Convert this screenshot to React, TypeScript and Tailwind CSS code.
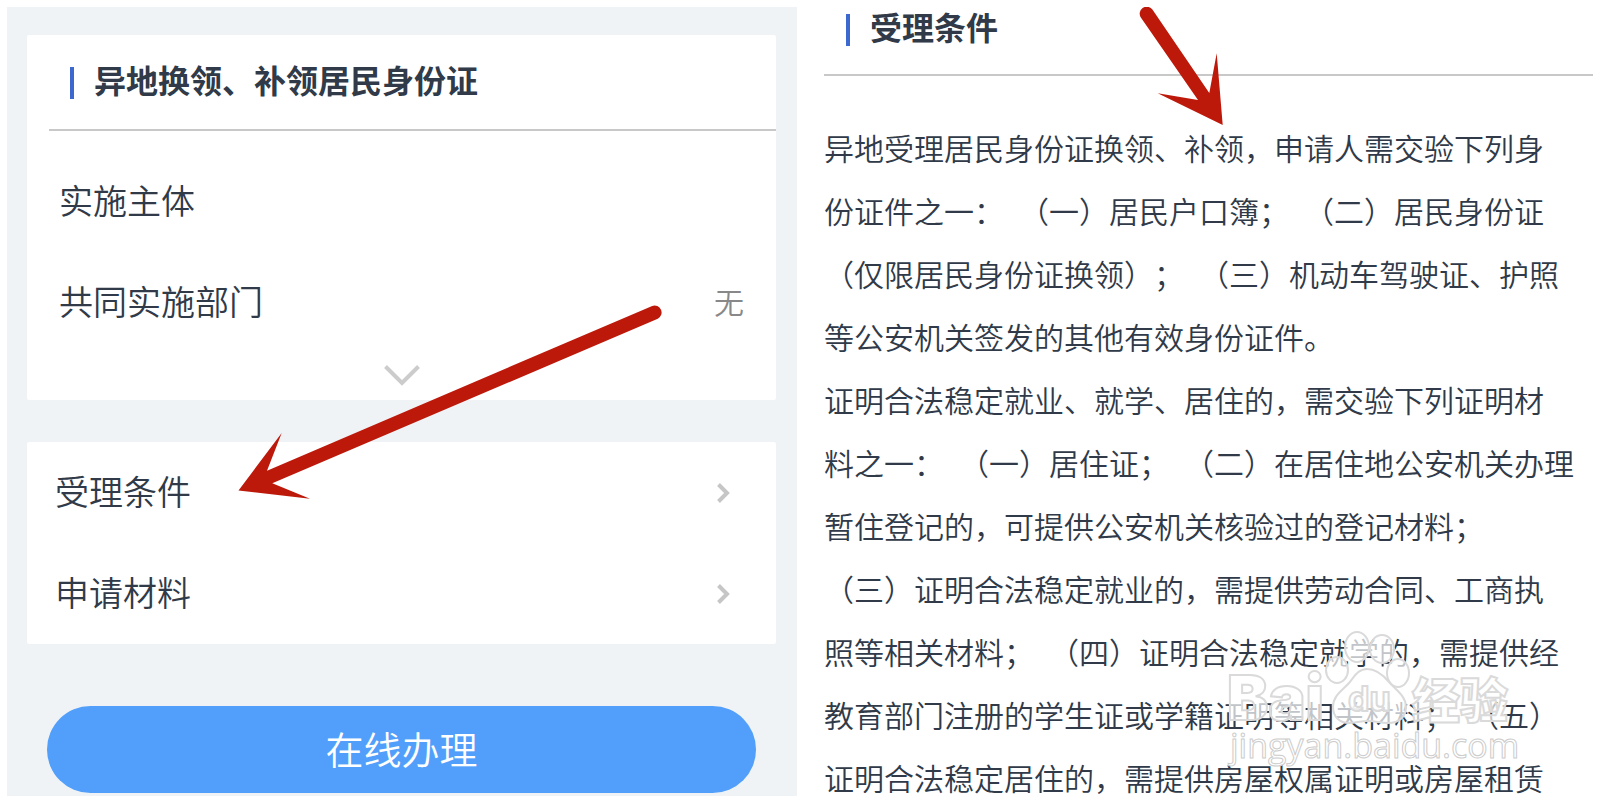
import { ReactNode } from "react";

const conditionLines = [
  "异地受理居民身份证换领、补领，申请人需交验下列身",
  "份证件之一：\u2002（一）居民户口簿；\u2002（二）居民身份证",
  "（仅限居民身份证换领）；\u2002（三）机动车驾驶证、护照",
  "等公安机关签发的其他有效身份证件。",
  "证明合法稳定就业、就学、居住的，需交验下列证明材",
  "料之一：\u2002（一）居住证；\u2002（二）在居住地公安机关办理",
  "暂住登记的，可提供公安机关核验过的登记材料；",
  "（三）证明合法稳定就业的，需提供劳动合同、工商执",
  "照等相关材料；\u2002（四）证明合法稳定就学的，需提供经",
  "教育部门注册的学生证或学籍证明等相关材料；\u2002（五）",
  "证明合法稳定居住的，需提供房屋权属证明或房屋租赁",
];

function SectionTitle({ children }: { children: ReactNode }) {
  return (
    <div className="flex items-center gap-5">
      <span className="w-1 h-8 bg-[#3d68cf]"></span>
      <h2 className="text-[32px] leading-[38px] font-bold pb-2">{children}</h2>
    </div>
  );
}

function LinkRow({ label }: { label: string }) {
  return (
    <a href="#" className="flex h-[101px] items-center justify-between pl-7 pr-[46px]">
      <span className="text-[34px] leading-[48px] pb-1">{label}</span>
      <svg width="13" height="20" viewBox="0 0 13 20" fill="none" stroke="#c6c6c6" strokeWidth="4">
        <path d="M1.5 1.5 10 10 1.5 18.5" />
      </svg>
    </a>
  );
}

function Watermark() {
  return (
    <svg
      className="absolute right-[73px] bottom-[21px] w-[300px] h-[150px] pointer-events-none"
      viewBox="1220 625 300 150"
      fill="#ffffff"
      fillOpacity="0.7"
      stroke="#dadada"
      strokeWidth="2"
    >
      <ellipse cx="1337" cy="670" rx="11" ry="13" />
      <ellipse cx="1357" cy="647" rx="12" ry="15" />
      <ellipse cx="1382" cy="649" rx="12" ry="14" />
      <ellipse cx="1398" cy="673" rx="11" ry="14" />
      <path d="M1367 669c-9 0-13 8-18 14-6 7-16 12-16 24 0 10 7 16 16 16 7 0 11-2 19-2s12 2 20 2c11 0 18-6 18-16 0-11-10-17-17-25-5-6-12-13-22-13Z" />
      <text x="1227" y="720" className="font-['Inter'] font-black text-[62px]">Bai</text>
      <text x="1348" y="711" className="font-['Inter'] font-bold text-[34px]">du</text>
      <text x="1412" y="718" className="font-['Noto_Sans_CJK_SC'] font-black text-[48px]">经验</text>
      <text x="1230" y="758" strokeWidth="1" stroke="#cccccc" className="font-['Open_Sans'] font-medium text-[34px]">jingyan.baidu.com</text>
    </svg>
  );
}

export default function App() {
  return (
    <main className="grid grid-cols-[790fr_796fr] p-[7px] bg-white text-[#303a48] font-['Noto_Sans_CJK_SC',sans-serif] font-[350] [text-spacing-trim:space-all]">
      <section className="relative flex flex-col bg-[#eff3f6] pt-7 pl-5 pr-[21px] pb-[3px]">
        <div className="bg-white rounded-xs">
          <div className="flex h-[94px] items-center pt-0.5 pl-[43px]">
            <SectionTitle>异地换领、补领居民身份证</SectionTitle>
          </div>
          <hr className="ml-[22px] border-t-2 border-[#c8c8c8]" />
          <div className="pt-5 pl-8 pr-8">
            <div className="flex h-[101px] items-center justify-between">
              <span className="text-[34px] leading-[48px] pb-1">实施主体</span>
            </div>
            <div className="flex h-[101px] items-center justify-between">
              <span className="text-[34px] leading-[48px] pb-1">共同实施部门</span>
              <span className="text-[30px] leading-[48px] pb-1 text-[#888888]">无</span>
            </div>
          </div>
          <button aria-label="展开" className="flex w-full h-[47px] pt-3 justify-center">
            <svg width="36" height="21" viewBox="0 0 36 21" fill="none" stroke="#cccccc" strokeWidth="4">
              <path d="M1.5 1.5 18 18 34.5 1.5" />
            </svg>
          </button>
        </div>

        <nav className="mt-[42px] bg-white rounded-xs">
          <LinkRow label="受理条件" />
          <LinkRow label="申请材料" />
        </nav>

        <button className="mt-[62px] mx-5 h-[87px] pb-1 rounded-full bg-[#519ffa] text-white text-[38px] leading-[48px]">
          在线办理
        </button>

        <svg
          className="absolute left-[231px] top-[298px] w-[424px] h-[194px] pointer-events-none"
          viewBox="238 305 424 194"
          fill="#bd190b"
        >
          <path d="M238.5 490.5 281.7 433 267 470.7 652.2 305.9A7 7 0 0 1 657.8 318.7L272.3 483.3 310 498.7Z" />
        </svg>
      </section>

      <section className="relative pl-[27px]">
        <div className="flex h-[67px] items-start pl-[22px]">
          <SectionTitle>受理条件</SectionTitle>
        </div>
        <hr className="border-t-2 border-[#c8c8c8]" />
        <p className="mt-10 -mb-5 text-[30px] leading-[63px] whitespace-nowrap">
          {conditionLines.map((line) => (
            <span key={line} className="block">
              {line}
            </span>
          ))}
        </p>

        <svg
          className="absolute left-[342px] top-0 w-[86px] h-[120px] pointer-events-none"
          viewBox="1139 7 86 120"
          fill="#bd190b"
        >
          <path d="M1222.7 125 1216.7 53.3 1209.3 93 1152.4 9.6A7 7 0 0 0 1141 17.8L1198 100 1157.7 93.3Z" />
        </svg>
        <Watermark />
      </section>
    </main>
  );
}
